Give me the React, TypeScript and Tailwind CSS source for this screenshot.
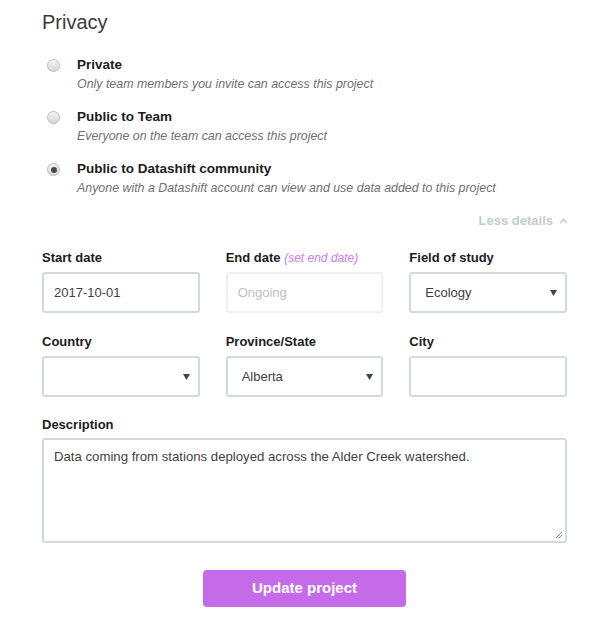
const font = { fontFamily: '"Liberation Sans", Arial, sans-serif' };

function Radio({ checked }: { checked?: boolean }) {
  return (
    <span className="mt-[3px] flex h-[13px] w-[13px] shrink-0 items-center justify-center rounded-full border border-[#b9b9b9] bg-gradient-to-b from-[#f4f4f4] to-[#d8d8d8]">
      {checked && <span className="h-[6px] w-[6px] rounded-full bg-[#4a4a4a]" />}
    </span>
  );
}

function Option({ title, desc, checked }: { title: string; desc: string; checked?: boolean }) {
  return (
    <div className="flex items-start gap-[17px] pl-[5px]">
      <Radio checked={checked} />
      <div className="flex flex-col">
        <span className="text-[13.5px] font-bold leading-[18px] text-[#1e1a22]">{title}</span>
        <span className="mt-[1px] text-[12.4px] italic leading-[18px] text-[#707070]">{desc}</span>
      </div>
    </div>
  );
}

function Label({ children }: { children: React.ReactNode }) {
  return <div className="h-[18px] text-[13px] font-bold leading-[18px] text-[#1e1a22]">{children}</div>;
}

function Box({ children, disabled, select }: { children?: React.ReactNode; disabled?: boolean; select?: boolean }) {
  return (
    <div
      className={`mt-[5px] flex h-[41px] items-center justify-between rounded-[3px] border-2 text-[13px] ${
        select ? 'pl-[14px] pr-[10px]' : 'px-[10px]'
      } ${disabled ? 'border-[#eef0f1] text-[#c0c0c0]' : 'border-[#d3d9dc] text-[#3f3f3f]'}`}
    >
      <span>{children}</span>
      {select && (
        <svg width="7" height="7" viewBox="0 0 7 7" className="mr-[-2px]">
          <path d="M0 1h7L3.5 7z" fill="#444" />
        </svg>
      )}
    </div>
  );
}

export default function App() {
  return (
    <div className="w-[609px] bg-white px-[42px] pb-[27px] pt-[10px]" style={font}>
      <h2 className="text-[20px] font-light leading-[24px] text-[#3a3a3a]">Privacy</h2>

      <div className="mt-[22px] flex flex-col gap-[15px]">
        <Option title="Private" desc="Only team members you invite can access this project" />
        <Option title="Public to Team" desc="Everyone on the team can access this project" />
        <Option
          title="Public to Datashift community"
          desc="Anyone with a Datashift account can view and use data added to this project"
          checked
        />
      </div>

      <div className="mt-[15px] flex items-center justify-end gap-[6px] text-[13px] font-bold leading-[18px] text-[#c3ccd1]">
        <span>Less details</span>
        <svg width="9" height="6" viewBox="0 0 9 6" className="mr-[-1px]">
          <path d="M1 5l3.5-3.5L8 5" fill="none" stroke="#c3ccd1" strokeWidth="1.6" />
        </svg>
      </div>

      <div className="mt-[19px] grid grid-cols-3 gap-x-[26px] gap-y-[20px]">
        <div>
          <Label>Start date</Label>
          <Box>2017-10-01</Box>
        </div>
        <div>
          <Label>
            End date{' '}
            <span className="text-[12px] font-normal italic text-[#c97ee9]">(set end date)</span>
          </Label>
          <Box disabled>Ongoing</Box>
        </div>
        <div>
          <Label>Field of study</Label>
          <Box select>Ecology</Box>
        </div>
        <div>
          <Label>Country</Label>
          <Box select />
        </div>
        <div>
          <Label>Province/State</Label>
          <Box select>Alberta</Box>
        </div>
        <div>
          <Label>City</Label>
          <Box />
        </div>
      </div>

      <div className="mt-[19px]">
        <Label>Description</Label>
        <div className="relative mt-[4px] h-[105px] rounded-[3px] border-2 border-[#d3d9dc] px-[10px] py-[8px] text-[13.2px] leading-[18px] text-[#3f3f3f]">
          Data coming from stations deployed across the Alder Creek watershed.
          <svg width="8" height="8" viewBox="0 0 8 8" className="absolute bottom-[2px] right-[2px]">
            <path d="M1 7L7 1M4 7L7 4" stroke="#888" strokeWidth="1" />
          </svg>
        </div>
      </div>

      <div className="mt-[27px] flex justify-center">
        <button className="h-[37px] w-[203px] rounded-[4px] bg-[#c56be9] text-[15px] font-bold text-white">
          Update project
        </button>
      </div>
    </div>
  );
}
